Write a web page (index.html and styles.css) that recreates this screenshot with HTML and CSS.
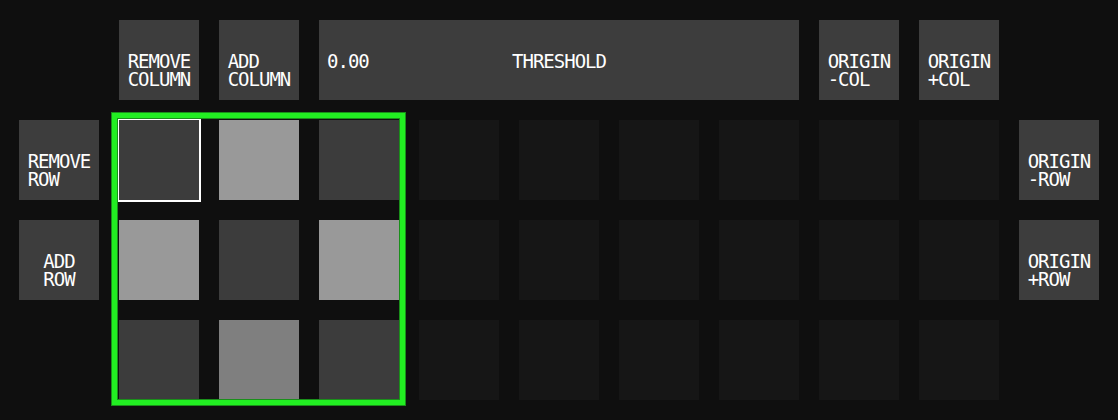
FILE: index.html
```html
<!DOCTYPE html>
<html lang="en">
<head>
  <meta charset="UTF-8">
  <title>Pattern grid</title>
  <link rel="stylesheet" href="styles.css">
</head>
<body>
  <div class="board">
    <!-- top bar -->
    <div class="spacer"></div>
    <button class="btn"><span>REMOVE<br>COLUMN</span></button>
    <button class="btn"><span>ADD<br>COLUMN</span></button>
    <div class="threshold">
      <span class="value">0.00</span>
      <span class="label">THRESHOLD</span>
      <span></span>
    </div>
    <button class="btn"><span>ORIGIN<br>-COL</span></button>
    <button class="btn"><span>ORIGIN<br>+COL</span></button>
    <div class="spacer"></div>

    <!-- row 1 -->
    <button class="btn"><span>REMOVE<br>ROW</span></button>
    <div class="cell on-0 selected"></div>
    <div class="cell on-2"></div>
    <div class="cell on-0"></div>
    <div class="cell"></div><div class="cell"></div><div class="cell"></div>
    <div class="cell"></div><div class="cell"></div><div class="cell"></div>
    <button class="btn"><span>ORIGIN<br>-ROW</span></button>

    <!-- row 2 -->
    <button class="btn"><span>ADD<br>ROW</span></button>
    <div class="cell on-2"></div>
    <div class="cell on-0"></div>
    <div class="cell on-2"></div>
    <div class="cell"></div><div class="cell"></div><div class="cell"></div>
    <div class="cell"></div><div class="cell"></div><div class="cell"></div>
    <button class="btn"><span>ORIGIN<br>+ROW</span></button>

    <!-- row 3 -->
    <div class="spacer"></div>
    <div class="cell on-0"></div>
    <div class="cell on-1"></div>
    <div class="cell on-0"></div>
    <div class="cell"></div><div class="cell"></div><div class="cell"></div>
    <div class="cell"></div><div class="cell"></div><div class="cell"></div>
    <div class="spacer"></div>

    <!-- active pattern frame (overlay) -->
    <div class="frame"></div>
  </div>
</body>
</html>
```

FILE: styles.css
```css
html,body{margin:0;height:100%}
body{background:#0f0f0f;display:flex;align-items:center;justify-content:center;
     font-family:"DejaVu Sans Mono","Liberation Mono",monospace;color:#fff}

.board{position:relative;display:grid;grid-template-columns:repeat(11,80px);grid-template-rows:repeat(4,80px);gap:20px}

.btn{border:none;margin:0;background:#3d3d3d;color:#fff;font:inherit;font-size:19px;line-height:18px;
     letter-spacing:-1px;padding:32px 0 0;display:flex;justify-content:center;align-items:flex-start;cursor:pointer}
.btn span{display:inline-block;text-align:left}

.threshold{grid-column:span 5;background:#3d3d3d;font-size:19px;line-height:18px;letter-spacing:-1px;
           padding:32px 8px 0;display:grid;grid-template-columns:1fr auto 1fr;align-items:start}

.cell{background:#161616}
.cell.on-0{background:#3c3c3c}
.cell.on-1{background:#7f7f7f}
.cell.on-2{background:#999}
.cell.selected{outline:2px solid #fff}

/* pattern bounds, drawn over the cells */
.frame{position:absolute;grid-column:2/5;grid-row:2/5;top:-7px;left:-7px;right:-6px;bottom:-5px;
       border:5px solid #22ee22;box-shadow:0 0 0 1px #1a8f1a,inset 0 0 0 1px #1a8f1a;pointer-events:none}
```
